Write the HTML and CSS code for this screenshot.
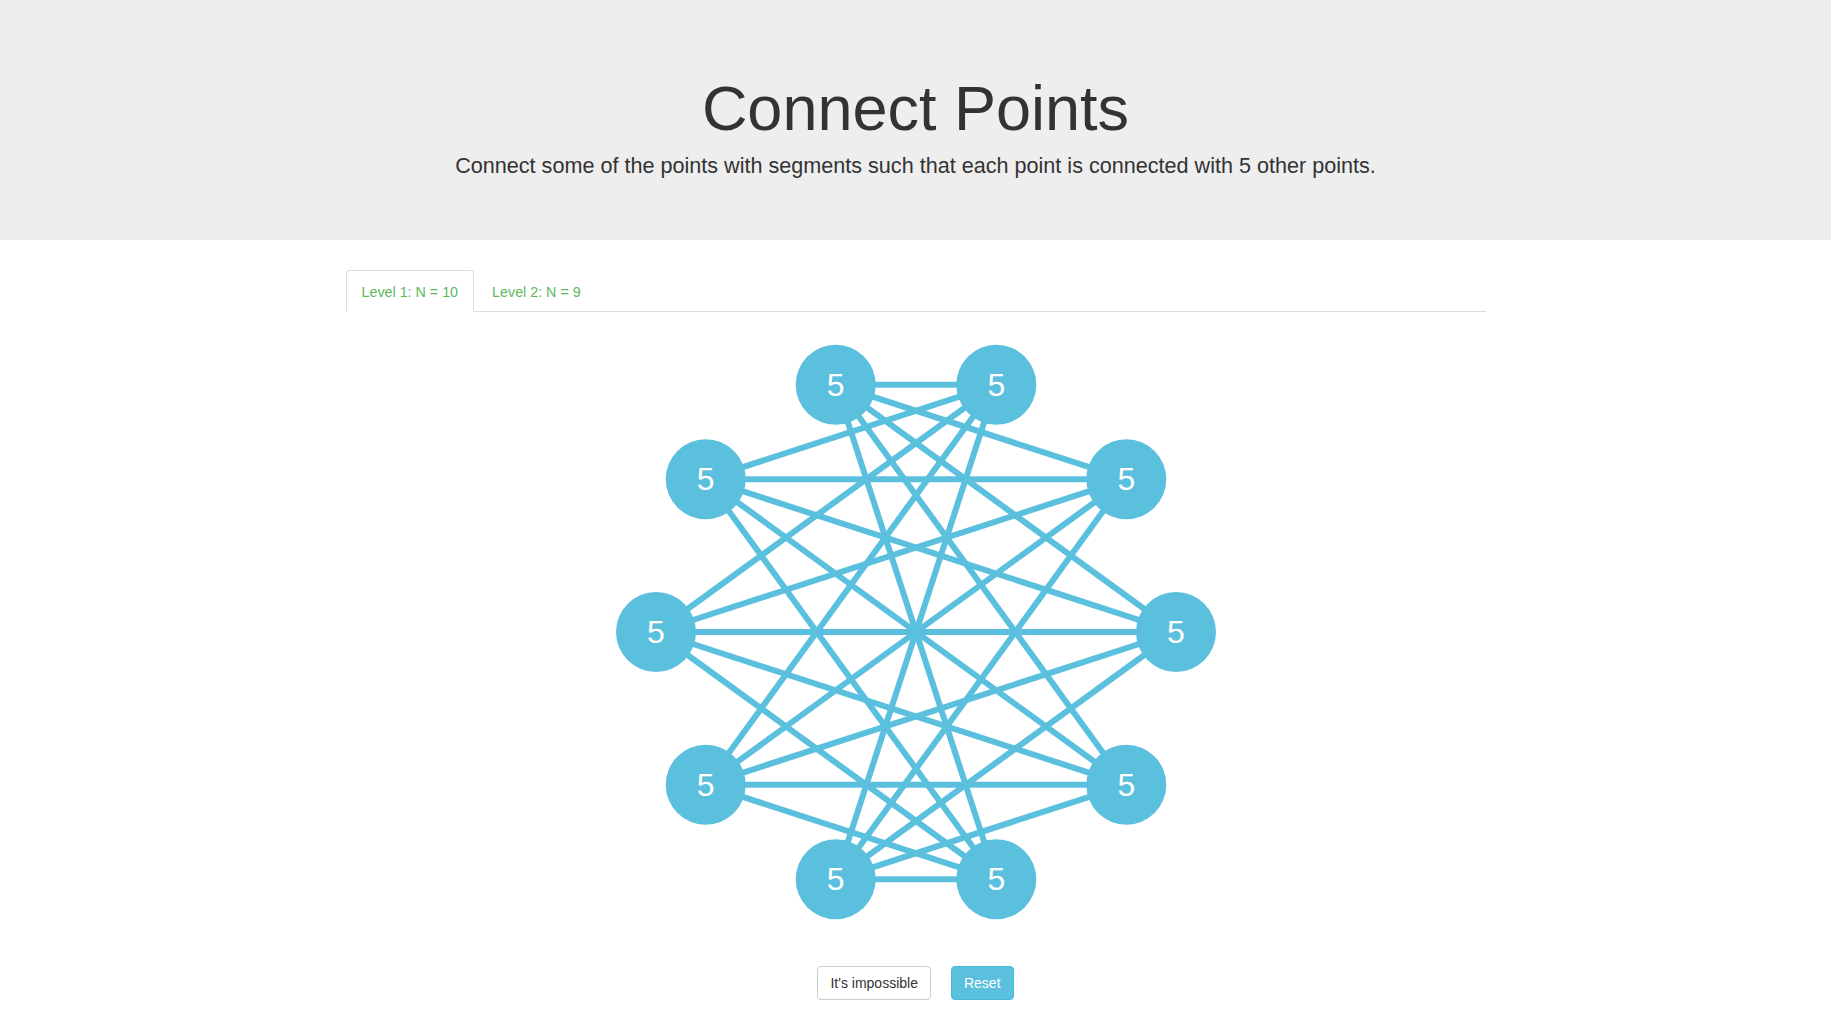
FILE: index.html
```html
<!DOCTYPE html>
<html lang="en">
<head>
<meta charset="utf-8">
<title>Connect Points</title>
<link rel="stylesheet" href="styles.css">
</head>
<body>
<header class="jumbotron">
  <div class="container">
    <h1 class="title">Connect Points</h1>
    <p class="lead">Connect some of the points with segments such that each point is connected with 5 other points.</p>
  </div>
</header>
<main class="container">
  <ul class="tabs">
    <li class="tab active"><a href="#">Level 1: N = 10</a></li>
    <li class="tab"><a href="#">Level 2: N = 9</a></li>
  </ul>
  <svg class="graph" width="640" height="640" viewBox="0 0 640 640" xmlns="http://www.w3.org/2000/svg">
    <g class="edges">
      <line x1="239.7" y1="567.3" x2="400.3" y2="72.7"/>
      <line x1="239.7" y1="567.3" x2="530.3" y2="167.2"/>
      <line x1="239.7" y1="567.3" x2="580" y2="320"/>
      <line x1="239.7" y1="567.3" x2="530.3" y2="472.8"/>
      <line x1="239.7" y1="567.3" x2="400.3" y2="567.3"/>
      <line x1="109.7" y1="472.8" x2="400.3" y2="72.7"/>
      <line x1="109.7" y1="472.8" x2="530.3" y2="167.2"/>
      <line x1="109.7" y1="472.8" x2="580" y2="320"/>
      <line x1="109.7" y1="472.8" x2="530.3" y2="472.8"/>
      <line x1="109.7" y1="472.8" x2="400.3" y2="567.3"/>
      <line x1="60" y1="320" x2="400.3" y2="72.7"/>
      <line x1="60" y1="320" x2="530.3" y2="167.2"/>
      <line x1="60" y1="320" x2="580" y2="320"/>
      <line x1="60" y1="320" x2="530.3" y2="472.8"/>
      <line x1="60" y1="320" x2="400.3" y2="567.3"/>
      <line x1="109.7" y1="167.2" x2="400.3" y2="72.7"/>
      <line x1="109.7" y1="167.2" x2="530.3" y2="167.2"/>
      <line x1="109.7" y1="167.2" x2="580" y2="320"/>
      <line x1="109.7" y1="167.2" x2="530.3" y2="472.8"/>
      <line x1="109.7" y1="167.2" x2="400.3" y2="567.3"/>
      <line x1="239.7" y1="72.7" x2="400.3" y2="72.7"/>
      <line x1="239.7" y1="72.7" x2="530.3" y2="167.2"/>
      <line x1="239.7" y1="72.7" x2="580" y2="320"/>
      <line x1="239.7" y1="72.7" x2="530.3" y2="472.8"/>
      <line x1="239.7" y1="72.7" x2="400.3" y2="567.3"/>
    </g>
    <g class="nodes">
      <circle cx="580" cy="320" r="40"/><text x="580" y="320">5</text>
      <circle cx="530.3" cy="472.8" r="40"/><text x="530.3" y="472.8">5</text>
      <circle cx="400.3" cy="567.3" r="40"/><text x="400.3" y="567.3">5</text>
      <circle cx="239.7" cy="567.3" r="40"/><text x="239.7" y="567.3">5</text>
      <circle cx="109.7" cy="472.8" r="40"/><text x="109.7" y="472.8">5</text>
      <circle cx="60" cy="320" r="40"/><text x="60" y="320">5</text>
      <circle cx="109.7" cy="167.2" r="40"/><text x="109.7" y="167.2">5</text>
      <circle cx="239.7" cy="72.7" r="40"/><text x="239.7" y="72.7">5</text>
      <circle cx="400.3" cy="72.7" r="40"/><text x="400.3" y="72.7">5</text>
      <circle cx="530.3" cy="167.2" r="40"/><text x="530.3" y="167.2">5</text>
    </g>
  </svg>
  <div class="actions">
    <button class="btn btn-default" type="button">It's impossible</button>
    <button class="btn btn-info" type="button">Reset</button>
  </div>
</main>
</body>
</html>
```

FILE: styles.css
```css
* {
  box-sizing: border-box;
}

html, body {
  margin: 0;
  padding: 0;
}

body {
  font-family: "Liberation Sans", Arial, Helvetica, sans-serif;
  font-size: 14px;
  line-height: 1.42857;
  color: #333;
  background: #fff;
}

.container {
  width: 1170px;
  margin: 0 auto;
  padding: 0 15px;
}

.jumbotron {
  background: #eee;
  padding: 48px 0;
  margin-bottom: 30px;
  text-align: center;
}

.title {
  font-size: 63px;
  font-weight: 500;
  line-height: 1.1;
  margin: 26px 0 7px;
}

.lead {
  font-size: 21.6px;
  font-weight: 200;
  line-height: 31px;
  margin: 0 0 11px;
}

.tabs {
  list-style: none;
  margin: 0;
  padding: 0;
  display: flex;
  border-bottom: 1px solid #ddd;
}

.tab {
  margin-bottom: -1px;
  margin-right: 2px;
}

.tab a {
  display: block;
  padding: 11px 15px 9px;
  font-size: 14.3px;
  line-height: 20px;
  color: #5cb85c;
  text-decoration: none;
  border: 1px solid transparent;
  border-radius: 4px 4px 0 0;
}

.tab.active a {
  background: #fff;
  border-color: #ddd #ddd transparent;
}

.graph {
  display: block;
  margin: 0 auto;
}

.edges line {
  stroke: #5bc0de;
  stroke-width: 6;
}

.nodes circle {
  fill: #5bc0de;
}

.nodes text {
  fill: #fff;
  font-family: "Liberation Sans", Arial, sans-serif;
  font-size: 32px;
  text-anchor: middle;
  dominant-baseline: central;
}

.actions {
  display: flex;
  justify-content: center;
  gap: 20px;
  margin-top: 14px;
  padding-bottom: 20px;
}

.btn {
  font-family: "Liberation Sans", Arial, sans-serif;
  font-size: 14px;
  line-height: 1.42857;
  padding: 7px 12px 5px;
  border: 1px solid transparent;
  border-radius: 4px;
  cursor: pointer;
}

.btn-default {
  background: #fff;
  border-color: #ccc;
  color: #333;
}

.btn-info {
  background: #5bc0de;
  border-color: #46b8da;
  color: #fff;
}
```
